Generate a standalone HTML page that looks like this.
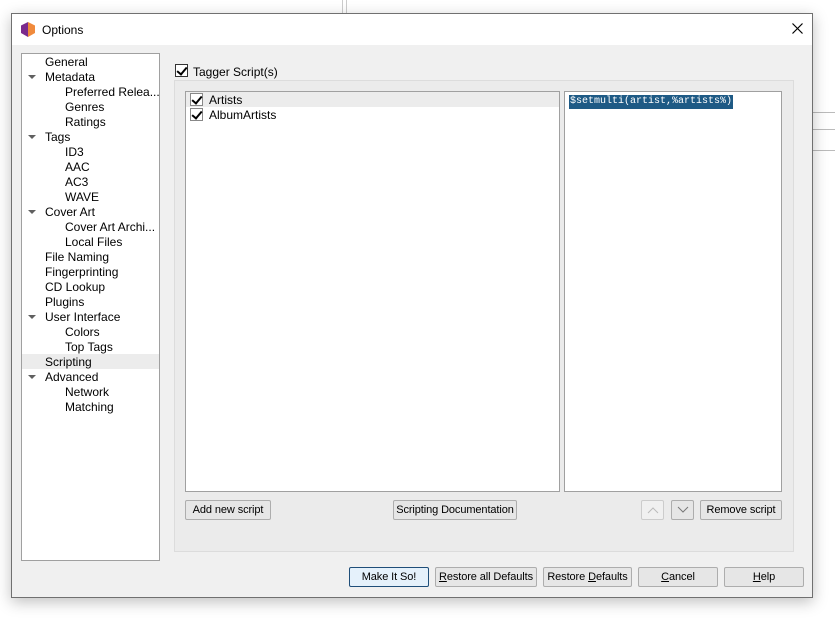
<!DOCTYPE html>
<html><head><meta charset="utf-8"><style>
*{box-sizing:border-box;margin:0;padding:0}
body{width:835px;height:632px;background:#fff;position:relative;overflow:hidden;font-family:"Liberation Sans",sans-serif;font-size:12px;color:#000}
.a{position:absolute}
.win{left:11px;top:13px;width:802px;height:585px;border:1px solid #707070;background:#f0f0f0;box-shadow:0 4px 14px rgba(0,0,0,.25)}
.title{left:0;top:0;width:800px;height:31px;background:#fff}
.tree{left:9px;top:39px;width:139px;height:508px;background:#fff;border:1px solid #a0a0a0}
.it{position:absolute;height:15px;line-height:17px;white-space:nowrap}
.tri{position:absolute;width:0;height:0;border-left:4px solid transparent;border-right:4px solid transparent;border-top:4px solid #606060}
.btn{position:absolute;height:20px;border:1px solid #adadad;background:#e6e6e6;border-radius:2px;text-align:center;line-height:18px;font-size:11px;white-space:nowrap;overflow:hidden;letter-spacing:-0.1px}
.cb{position:absolute;width:13px;height:13px;border:1px solid #333;background:#fff}
.cb::after{content:"";position:absolute;left:3px;top:0px;width:4px;height:8px;border:solid #000;border-width:0 2px 2px 0;transform:rotate(40deg)}
u{text-decoration:underline}
</style></head><body>
<div class="a" style="left:342px;top:0;width:1px;height:13px;background:#ccc"></div>
<div class="a" style="left:346px;top:0;width:1px;height:13px;background:#ccc"></div>
<div class="a" style="left:813px;top:112px;width:22px;height:1px;background:#bbb"></div>
<div class="a" style="left:813px;top:129px;width:22px;height:1px;background:#bbb"></div>
<div class="a" style="left:813px;top:150px;width:22px;height:1px;background:#bbb"></div>
<div class="a win">
 <div class="a title">
  <svg class="a" style="left:9px;top:8px" width="14" height="15" viewBox="0 0 14 15"><path d="M7 0L0 3.5V11L7 15Z" fill="#7b2a8c"/><path d="M7 0L14 3.5V11L7 15Z" fill="#f08a3c"/></svg>
  <div class="a" style="left:30px;top:9px;font-size:12px">Options</div>
  <svg class="a" style="left:780px;top:9px" width="11" height="11" viewBox="0 0 11 11"><path d="M0.5 0.5L10.5 10.5M10.5 0.5L0.5 10.5" stroke="#000" stroke-width="1.2"/></svg>
 </div>
 <div class="a tree">
  <div class="it" style="left:23px;top:0">General</div>
  <div class="tri" style="left:6px;top:21px"></div><div class="it" style="left:23px;top:15px">Metadata</div>
  <div class="it" style="left:43px;top:30px">Preferred Relea...</div>
  <div class="it" style="left:43px;top:45px">Genres</div>
  <div class="it" style="left:43px;top:60px">Ratings</div>
  <div class="tri" style="left:6px;top:81px"></div><div class="it" style="left:23px;top:75px">Tags</div>
  <div class="it" style="left:43px;top:90px">ID3</div>
  <div class="it" style="left:43px;top:105px">AAC</div>
  <div class="it" style="left:43px;top:120px">AC3</div>
  <div class="it" style="left:43px;top:135px">WAVE</div>
  <div class="tri" style="left:6px;top:156px"></div><div class="it" style="left:23px;top:150px">Cover Art</div>
  <div class="it" style="left:43px;top:165px">Cover Art Archi...</div>
  <div class="it" style="left:43px;top:180px">Local Files</div>
  <div class="it" style="left:23px;top:195px">File Naming</div>
  <div class="it" style="left:23px;top:210px">Fingerprinting</div>
  <div class="it" style="left:23px;top:225px">CD Lookup</div>
  <div class="it" style="left:23px;top:240px">Plugins</div>
  <div class="tri" style="left:6px;top:261px"></div><div class="it" style="left:23px;top:255px">User Interface</div>
  <div class="it" style="left:43px;top:270px">Colors</div>
  <div class="it" style="left:43px;top:285px">Top Tags</div>
  <div class="it" style="left:0;top:300px;width:137px;background:#ececec;padding-left:23px">Scripting</div>
  <div class="tri" style="left:6px;top:321px"></div><div class="it" style="left:23px;top:315px">Advanced</div>
  <div class="it" style="left:43px;top:330px">Network</div>
  <div class="it" style="left:43px;top:345px">Matching</div>
 </div>
 <div class="cb" style="left:163px;top:50px"></div>
 <div class="a" style="left:181px;top:51px">Tagger Script(s)</div>
 <div class="a" style="left:162px;top:66px;width:620px;height:472px;border:1px solid #dcdcdc;background:#ebebeb"></div>
 <div class="a" style="left:173px;top:77px;width:375px;height:401px;background:#fff;border:1px solid #a0a0a0">
  <div class="a" style="left:0;top:0;width:373px;height:15px;background:#ececec"></div>
  <div class="cb" style="left:4px;top:1px;border-color:#888"></div><div class="it" style="left:23px;top:0">Artists</div>
  <div class="cb" style="left:4px;top:16px;border-color:#888"></div><div class="it" style="left:23px;top:15px">AlbumArtists</div>
 </div>
 <div class="a" style="left:552px;top:77px;width:218px;height:401px;background:#fff;border:1px solid #a0a0a0">
  <div class="a" style="left:4px;top:3px;background:#1e5a85;color:#fff;font-family:'Liberation Mono',monospace;font-size:10px;line-height:14px;padding:0 1px">$setmulti(artist,%artists%)</div>
 </div>
 <div class="btn" style="left:173px;top:486px;width:86px">Add new script</div>
 <div class="btn" style="left:381px;top:486px;width:124px">Scripting Documentation</div>
 <div class="btn" style="left:629px;top:486px;width:23px;border-color:#ccc;background:#f0f0f0"><svg width="12" height="8" style="margin-top:5px" viewBox="0 0 12 8"><path d="M1 7L6 2L11 7" fill="none" stroke="#bbb"/></svg></div>
 <div class="btn" style="left:659px;top:486px;width:23px"><svg width="12" height="8" style="margin-top:5px" viewBox="0 0 12 8"><path d="M1 1L6 6L11 1" fill="none" stroke="#777"/></svg></div>
 <div class="btn" style="left:688px;top:486px;width:82px">Remove script</div>
 <div class="btn" style="left:337px;top:553px;width:80px;border-color:#1f4e79;background:#e5f1fb">Make It So!</div>
 <div class="btn" style="left:423px;top:553px;width:102px"><u>R</u>estore all Defaults</div>
 <div class="btn" style="left:531px;top:553px;width:89px">Restore <u>D</u>efaults</div>
 <div class="btn" style="left:626px;top:553px;width:80px"><u>C</u>ancel</div>
 <div class="btn" style="left:712px;top:553px;width:80px"><u>H</u>elp</div>
</div>
</body></html>
